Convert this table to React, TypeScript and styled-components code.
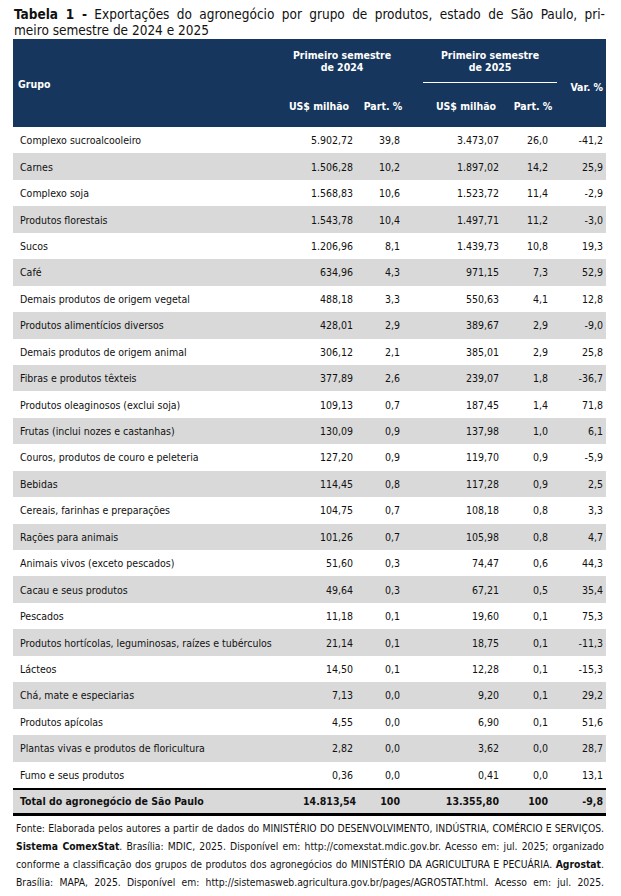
import React from "react";
import styled, { createGlobalStyle } from "styled-components";

const GlobalStyle = createGlobalStyle`
  html, body { margin: 0; padding: 0; background: #ffffff; }
  body {
    font-family: "DejaVu Sans Condensed", "DejaVu Sans", sans-serif;
    font-stretch: condensed;
    color: #111111;
  }
`;

const Page = styled.div`
  width: 621px;
  padding: 6px 15px 0 13px;
  box-sizing: border-box;
`;

const Title = styled.div`
  font-size: 13.5px;
  line-height: 16px;
  color: #111;
  margin-bottom: 1px;
  padding-left: 1px;
  width: 591px;
`;

const JustLine = styled.span<{ $last?: boolean }>`
  display: block;
  text-align: justify;
  text-align-last: ${(p) => (p.$last ? "left" : "justify")};
  white-space: nowrap;
`;

const Bold = styled.b`
  font-weight: 700;
`;

const Table = styled.div`
  width: 593px;
`;

const Header = styled.div`
  display: grid;
  grid-template-columns: 270px 72px 56px 12px 86px 48px 49px;
  grid-template-rows: 43px 1px 44px;
  background: #17365d;
  color: #ffffff;
  font-weight: 700;
  font-size: 10.5px;
`;

const HeadGroup = styled.div`
  grid-column: 1;
  grid-row: 1 / 4;
  align-self: center;
  padding: 2px 0 0 5px;
  line-height: 12px;
`;

const HeadVar = styled.div`
  grid-column: 7;
  grid-row: 1 / 4;
  align-self: center;
  text-align: right;
  padding: 8px 3px 0 0;
  line-height: 12px;
`;

const HeadTop = styled.div<{ $col: string; $shift: number }>`
  grid-column: ${(p) => p.$col};
  grid-row: 1;
  align-self: end;
  text-align: center;
  line-height: 12px;
  padding-bottom: 9.5px;
  padding-right: ${(p) => p.$shift}px;
`;

const HeadRule = styled.div`
  grid-column: 5 / 7;
  grid-row: 2;
  background: #ffffff;
`;

const HeadSub = styled.div<{ $col: number }>`
  grid-column: ${(p) => p.$col};
  grid-row: 3;
  text-align: center;
  line-height: 12px;
  padding-top: 17px;
  white-space: nowrap;
`;

const Row = styled.div<{ $shade: boolean; $total?: boolean }>`
  display: grid;
  grid-template-columns: 290px 50px 47px 99px 49px 55px;
  padding-right: 3px;
  align-items: center;
  height: ${(p) => (p.$total ? "23px" : "26.44px")};
  background: ${(p) => (p.$shade ? "#d9d9d9" : "#ffffff")};
  font-size: 10.5px;
  font-weight: ${(p) => (p.$total ? 700 : 400)};
  border-top: ${(p) => (p.$total ? "2px solid #000" : "none")};
  border-bottom: ${(p) => (p.$total ? "3px solid #000" : "none")};
`;

const Name = styled.div`
  padding-left: 7px;
  white-space: nowrap;
`;

const Num = styled.div`
  text-align: right;
  white-space: nowrap;
`;

const Footer = styled.div`
  margin-top: 3px;
  padding-left: 3px;
  width: 588px;
  font-size: 10.3px;
  line-height: 18px;
  color: #111;
`;

type RowData = [string, string, string, string, string, string];

const rows: RowData[] = [
  ["Complexo sucroalcooleiro", "5.902,72", "39,8", "3.473,07", "26,0", "-41,2"],
  ["Carnes", "1.506,28", "10,2", "1.897,02", "14,2", "25,9"],
  ["Complexo soja", "1.568,83", "10,6", "1.523,72", "11,4", "-2,9"],
  ["Produtos florestais", "1.543,78", "10,4", "1.497,71", "11,2", "-3,0"],
  ["Sucos", "1.206,96", "8,1", "1.439,73", "10,8", "19,3"],
  ["Café", "634,96", "4,3", "971,15", "7,3", "52,9"],
  ["Demais produtos de origem vegetal", "488,18", "3,3", "550,63", "4,1", "12,8"],
  ["Produtos alimentícios diversos", "428,01", "2,9", "389,67", "2,9", "-9,0"],
  ["Demais produtos de origem animal", "306,12", "2,1", "385,01", "2,9", "25,8"],
  ["Fibras e produtos têxteis", "377,89", "2,6", "239,07", "1,8", "-36,7"],
  ["Produtos oleaginosos (exclui soja)", "109,13", "0,7", "187,45", "1,4", "71,8"],
  ["Frutas (inclui nozes e castanhas)", "130,09", "0,9", "137,98", "1,0", "6,1"],
  ["Couros, produtos de couro e peleteria", "127,20", "0,9", "119,70", "0,9", "-5,9"],
  ["Bebidas", "114,45", "0,8", "117,28", "0,9", "2,5"],
  ["Cereais, farinhas e preparações", "104,75", "0,7", "108,18", "0,8", "3,3"],
  ["Rações para animais", "101,26", "0,7", "105,98", "0,8", "4,7"],
  ["Animais vivos (exceto pescados)", "51,60", "0,3", "74,47", "0,6", "44,3"],
  ["Cacau e seus produtos", "49,64", "0,3", "67,21", "0,5", "35,4"],
  ["Pescados", "11,18", "0,1", "19,60", "0,1", "75,3"],
  ["Produtos hortícolas, leguminosas, raízes e tubérculos", "21,14", "0,1", "18,75", "0,1", "-11,3"],
  ["Lácteos", "14,50", "0,1", "12,28", "0,1", "-15,3"],
  ["Chá, mate e especiarias", "7,13", "0,0", "9,20", "0,1", "29,2"],
  ["Produtos apícolas", "4,55", "0,0", "6,90", "0,1", "51,6"],
  ["Plantas vivas e produtos de floricultura", "2,82", "0,0", "3,62", "0,0", "28,7"],
  ["Fumo e seus produtos", "0,36", "0,0", "0,41", "0,0", "13,1"],
];

const total: RowData = ["Total do agronegócio de São Paulo", "14.813,54", "100", "13.355,80", "100", "-9,8"];

const DataRow = ({ d, shade, isTotal }: { d: RowData; shade: boolean; isTotal?: boolean }) => (
  <Row $shade={shade} $total={isTotal}>
    <Name>{d[0]}</Name>
    {d.slice(1).map((v, i) => (
      <Num key={i}>{v}</Num>
    ))}
  </Row>
);

export default function App() {
  return (
    <>
      <GlobalStyle />
      <Page>
        <Title>
          <JustLine>
            <Bold>Tabela 1 -</Bold> Exportações do agronegócio por grupo de produtos, estado de São Paulo, pri-
          </JustLine>
          <JustLine $last>meiro semestre de 2024 e 2025</JustLine>
        </Title>
        <Table>
          <Header>
            <HeadGroup>Grupo</HeadGroup>
            <HeadTop $col="2 / 4" $shift={10}>
              Primeiro semestre
              <br />
              de 2024
            </HeadTop>
            <HeadTop $col="5 / 7" $shift={0}>
              Primeiro semestre
              <br />
              de 2025
            </HeadTop>
            <HeadRule />
            <HeadVar>Var. %</HeadVar>
            <HeadSub $col={2}>US$ milhão</HeadSub>
            <HeadSub $col={3}>Part. %</HeadSub>
            <HeadSub $col={5}>US$ milhão</HeadSub>
            <HeadSub $col={6}>Part. %</HeadSub>
          </Header>
          {rows.map((d, i) => (
            <DataRow key={d[0]} d={d} shade={i % 2 === 1} />
          ))}
          <DataRow d={total} shade isTotal />
        </Table>
        <Footer>
          <JustLine>
            Fonte: Elaborada pelos autores a partir de dados do MINISTÉRIO DO DESENVOLVIMENTO, INDÚSTRIA, COMÉRCIO E SERVIÇOS.
          </JustLine>
          <JustLine>
            <Bold>Sistema ComexStat</Bold>. Brasília: MDIC, 2025. Disponível em: http://comexstat.mdic.gov.br. Acesso em: jul. 2025; organizado
          </JustLine>
          <JustLine>
            conforme a classificação dos grupos de produtos dos agronegócios do MINISTÉRIO DA AGRICULTURA E PECUÁRIA. <Bold>Agrostat</Bold>.
          </JustLine>
          <JustLine>
            Brasília: MAPA, 2025. Disponível em: http://sistemasweb.agricultura.gov.br/pages/AGROSTAT.html. Acesso em: jul. 2025.
          </JustLine>
        </Footer>
      </Page>
    </>
  );
}
